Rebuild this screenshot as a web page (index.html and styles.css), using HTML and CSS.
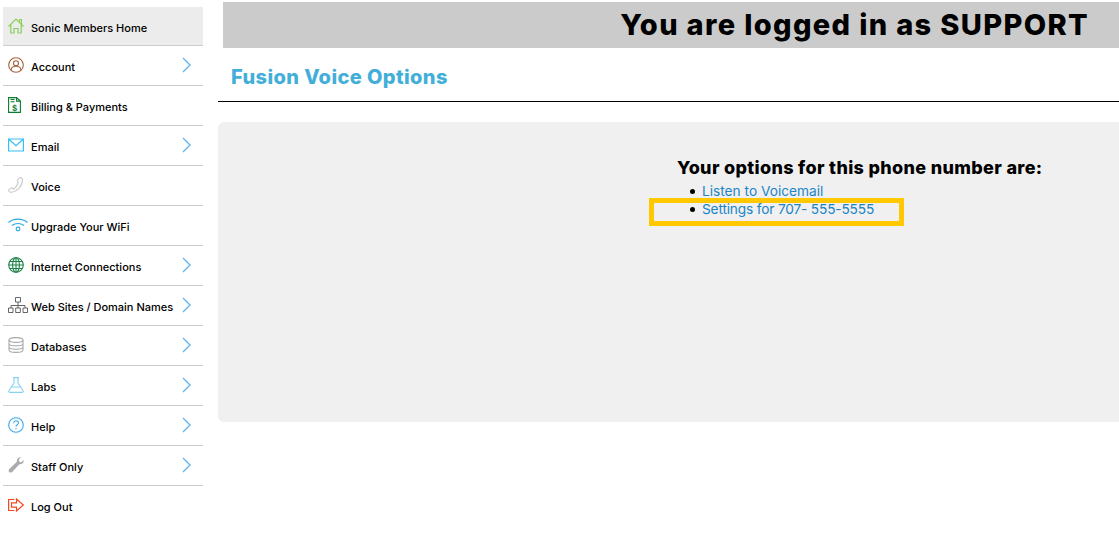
FILE: index.html
```html
<!DOCTYPE html>
<html>
<head>
<meta charset="utf-8">
<title>Fusion Voice Options</title>
<link rel="stylesheet" href="styles.css">
</head>
<body>

<div class="page">

<div class="sidebar">
	<a class="item home">
		<svg class="icon" viewBox="0 0 16 16" fill="none" stroke="#8ccf5a" stroke-width="1.200"><path d="M.5 8.500 8 1l7.500 7.500M2.800 6.500V15H6v-4.500h4V15h3.200V6.500M11.500 4V1.500h2V6"/></svg>
		<span class="label">Sonic Members Home</span>
	</a>
	<a class="item">
		<svg class="icon" viewBox="0 0 16 16" fill="none" stroke="#a5623a" stroke-width="1.100"><circle cx="8" cy="8" r="7.300"/><circle cx="8" cy="6.300" r="2.500"/><path d="M3 13c.4-2.900 2.300-3.700 5-3.700s4.600.8 5 3.700"/></svg>
		<span class="label">Account</span>
		<svg class="chev" viewBox="0 0 9 16" fill="none" stroke="#5cb6ea" stroke-width="1.300"><path d="M1 1l7 7-7 7"/></svg>
	</a>
	<a class="item">
		<svg class="icon" viewBox="0 0 16 16" fill="none" stroke="#0a7a2f" stroke-width="1.100"><path d="M.6.600h8l3.800 3.500V15.400H.6zM8.600.600v3.500h3.800M2.500 2.500h4M2.500 4.800h4"/><text x="6.500" y="13.500" font-size="8.500" font-weight="700" font-family="Liberation Sans" text-anchor="middle" fill="#0a7a2f" stroke="none">$</text></svg>
		<span class="label">Billing &amp; Payments</span>
	</a>
	<a class="item">
		<svg class="icon" viewBox="0 0 16 16" fill="none" stroke="#35c0f5" stroke-width="1.200"><path d="M.6 2h14.800v12H.6zM.6 2 8 8.800 15.400 2"/></svg>
		<span class="label">Email</span>
		<svg class="chev" viewBox="0 0 9 16" fill="none" stroke="#5cb6ea" stroke-width="1.300"><path d="M1 1l7 7-7 7"/></svg>
	</a>
	<a class="item">
		<svg class="icon" viewBox="0 0 16 16" fill="none" stroke="#cfcfcf" stroke-width="1.200"><path d="M11.500.7c1.500-.5 3 .6 3 2.200C14.500 9 9 14.800 3 15.300 1.400 15.300.3 14 .8 12.600l2.700-1.800 1.900 1.400c2.200-1.400 4-4 4.800-6.700L9.300 3.300z"/></svg>
		<span class="label">Voice</span>
	</a>
	<a class="item">
		<svg class="icon wide" viewBox="0 0 20 16" fill="none" stroke="#29a9e0" stroke-width="1.100"><path d="M.5 5.500C5.500 1 14.500 1 19.500 5.500M4 8.500c3.500-2.700 8.500-2.700 12 0"/><circle cx="10" cy="12" r="1.900"/></svg>
		<span class="label">Upgrade Your WiFi</span>
	</a>
	<a class="item">
		<svg class="icon" viewBox="0 0 16 16" fill="none" stroke="#1e8449" stroke-width="1.100"><circle cx="8" cy="8" r="7.300"/><ellipse cx="8" cy="8" rx="3.400" ry="7.300"/><path d="M.7 8h14.600M1.700 4.500h12.600M1.700 11.500h12.600M8 .7v14.600"/></svg>
		<span class="label">Internet Connections</span>
		<svg class="chev" viewBox="0 0 9 16" fill="none" stroke="#5cb6ea" stroke-width="1.300"><path d="M1 1l7 7-7 7"/></svg>
	</a>
	<a class="item">
		<svg class="icon wide" viewBox="0 0 20 16" fill="none" stroke="#555" stroke-width=".9"><path d="M7.500.5h5v4.500h-5zM10 5v3.500M3 11V8.500h14V11M10 8.500V11M.5 11h4.500v4.500H.5zM7.700 11h4.600v4.500H7.700zM15 11h4.500v4.500H15z"/></svg>
		<span class="label">Web Sites / Domain Names</span>
		<svg class="chev" viewBox="0 0 9 16" fill="none" stroke="#5cb6ea" stroke-width="1.300"><path d="M1 1l7 7-7 7"/></svg>
	</a>
	<a class="item">
		<svg class="icon" viewBox="0 0 16 16" fill="none" stroke="#a8a8a8" stroke-width="1.100"><ellipse cx="8" cy="3" rx="7" ry="2.400"/><path d="M1 3v10c0 1.300 3.100 2.400 7 2.400s7-1.100 7-2.400V3M1 6.400c0 1.300 3.100 2.400 7 2.400s7-1.100 7-2.400M1 9.800c0 1.300 3.100 2.400 7 2.400s7-1.100 7-2.400"/></svg>
		<span class="label">Databases</span>
		<svg class="chev" viewBox="0 0 9 16" fill="none" stroke="#5cb6ea" stroke-width="1.300"><path d="M1 1l7 7-7 7"/></svg>
	</a>
	<a class="item">
		<svg class="icon" viewBox="0 0 16 16" fill="none" stroke="#86d0f0" stroke-width="1.100"><path d="M5 .6h6M6 .6v5.400L1 13.500c-.6 1 0 1.900 1 1.900h12c1 0 1.600-.9 1-1.900L10 6V.6M3.500 10h9"/></svg>
		<span class="label">Labs</span>
		<svg class="chev" viewBox="0 0 9 16" fill="none" stroke="#5cb6ea" stroke-width="1.300"><path d="M1 1l7 7-7 7"/></svg>
	</a>
	<a class="item">
		<svg class="icon" viewBox="0 0 16 16" fill="none" stroke="#3fa9e6" stroke-width="1.100"><circle cx="8" cy="8" r="7.300"/><path d="M5.700 6.200C5.700 4.700 6.700 3.800 8 3.800s2.400.9 2.400 2.100c0 1.900-2.400 1.900-2.400 3.800M8 11v1.300"/></svg>
		<span class="label">Help</span>
		<svg class="chev" viewBox="0 0 9 16" fill="none" stroke="#5cb6ea" stroke-width="1.300"><path d="M1 1l7 7-7 7"/></svg>
	</a>
	<a class="item">
		<svg class="icon" viewBox="0 0 16 16" fill="#ababab"><path d="M15.700 3c.5 2.500-1.700 4.800-4.300 4.200L4.200 14.900c-.9.900-2.200.9-3 .1-.8-.8-.8-2.100.1-3L8.900 4.700C8.300 2.200 10.500-.1 13.100.3L10.800 2.700l.5 2 2.100.6z"/></svg>
		<span class="label">Staff Only</span>
		<svg class="chev" viewBox="0 0 9 16" fill="none" stroke="#5cb6ea" stroke-width="1.300"><path d="M1 1l7 7-7 7"/></svg>
	</a>
	<a class="item last">
		<svg class="icon" viewBox="0 0 16 16" fill="none" stroke="#f4491f" stroke-width="1.200"><path d="M6.500 2.500H.6v11h5.900M3.500 5.800h5V2l6.800 6-6.800 6v-3.800h-5z"/></svg>
		<span class="label">Log Out</span>
	</a>
</div>

<div class="main">
	<div class="topbar">You are logged in as SUPPORT</div>
	<h1 class="title">Fusion Voice Options</h1>
	<div class="panel">
		<h2>Your options for this phone number are:</h2>
		<ul>
			<li><a href="#">Listen to Voicemail</a></li>
			<li class="marked"><a href="#">Settings for 707- 555-5555</a></li>
		</ul>
	</div>
</div>

</div>

</body>
</html>
```

FILE: styles.css
```css
html, body {
	margin: 0;
	padding: 0;
	background: white;
}

body {
	font-family: "Inter", "Open Sans", sans-serif;
	color: black;
}

.page {
	display: flex;
	align-items: flex-start;
}

.sidebar {
	width: 200px;
	flex: none;
	margin: 7px 0 0 3px;
}

.item {
	display: flex;
	align-items: center;
	height: 39px;
	border-bottom: 1px solid #ccc;
	padding-left: 5px;
}

.item.home {
	height: 38px;
	background-color: #ececec;
}

.item.last {
	border-bottom: 0;
}

.icon {
	width: 16px;
	height: 16px;
	flex: none;
	margin-right: 7px;
	margin-top: -1px;
}

.icon.wide {
	width: 20px;
	margin-right: 3px;
}

.label {
	font-size: 11px;
	font-weight: 500;
	margin-top: 3px;
	white-space: nowrap;
}

.chev {
	width: 9px;
	height: 16px;
	margin-left: auto;
	margin-right: 12px;
	margin-top: -1px;
}

.main {
	flex: 1;
	padding: 2px 0 0 15px;
}

.topbar {
	margin-left: 5px;
	height: 46px;
	line-height: 46px;
	background-color: #cbcbcb;
	font-size: 29px;
	font-weight: 800;
	letter-spacing: 1.35px;
	text-align: right;
	padding-right: 30px;
}

.title {
	margin: 0;
	height: 53px;
	line-height: 58px;
	padding-left: 13px;
	font-size: 20px;
	font-weight: 800;
	letter-spacing: .4px;
	color: #43afd9;
	border-bottom: 1px solid black;
}

.panel {
	margin-top: 20px;
	height: 300px;
	background-color: #f0f0f0;
	border-radius: 6px 0 0 6px;
	box-sizing: border-box;
	padding: 35px 0 0 459px;
}

h2 {
	margin: 0;
	font-size: 18px;
	line-height: 22px;
	font-weight: 800;
	letter-spacing: .33px;
}

ul {
	margin: 3px 0 0 0;
	padding: 0 0 0 25px;
	list-style: none;
}

li {
	position: relative;
	font-size: 13.700px;
	line-height: 18px;
}

li::before {
	content: "";
	position: absolute;
	left: -12px;
	top: 7px;
	width: 5px;
	height: 5px;
	border-radius: 50%;
	background-color: black;
}

li a {
	color: #1b85c7;
	text-decoration: none;
}

.marked a {
	letter-spacing: -.17px;
}

/* annotation box drawn over the second row */
.marked::after {
	content: "";
	position: absolute;
	left: -53px;
	top: -2px;
	width: 255px;
	height: 28px;
	box-sizing: border-box;
	border: 5px solid #ffc800;
}
```
